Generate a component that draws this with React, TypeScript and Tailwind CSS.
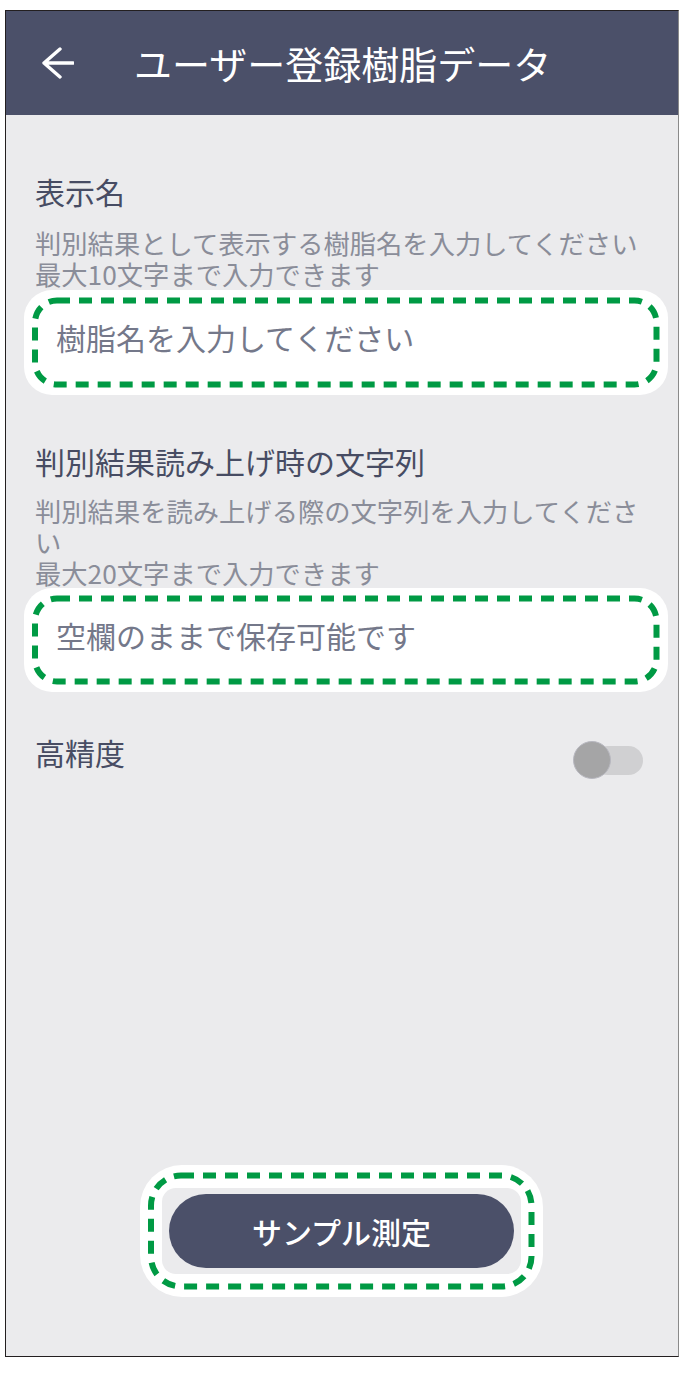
import React from "react";

function Dashed({ w, h, r }: { w: number; h: number; r: number }) {
  return (
    <svg
      className="absolute left-0 top-0 pointer-events-none"
      width={w}
      height={h}
      viewBox={`0 0 ${w} ${h}`}
    >
      <rect
        x={11}
        y={10.5}
        width={w - 22.5}
        height={h - 21}
        rx={r}
        ry={r}
        fill="none"
        stroke="#009a44"
        strokeWidth={6}
        strokeDasharray="13 9"
      />
    </svg>
  );
}

function Field({ h, text }: { h: number; text: string }) {
  return (
    <div
      className="relative -ml-[11px] w-[644px] bg-white rounded-[28px] flex items-center pl-[32px] pb-[11px]"
      style={{ height: h }}
    >
      <span className="text-[30px] leading-[40px] text-[#74788a]">{text}</span>
      <Dashed w={644} h={h} r={22} />
    </div>
  );
}

export default function App() {
  return (
    <div className="w-[683px] h-[1385px] bg-white pt-[10px] pl-[5px] font-['Noto_Sans_CJK_JP','Noto_Sans',sans-serif]">
      <div className="w-[674px] h-[1347px] border border-[#231f20] border-r-[#8a8a8a] bg-[#ebebed] flex flex-col">
        <header className="h-[104px] shrink-0 bg-[#4b5069] flex items-center">
          <svg
            className="ml-[36px] shrink-0"
            width="32"
            height="32"
            viewBox="0 0 32 32"
            fill="none"
            stroke="white"
            strokeWidth="3.4"
            strokeLinecap="round"
            strokeLinejoin="round"
          >
            <path d="M18 2 L2 16 L18 30 M2 16 H31" />
          </svg>
          <h1 className="ml-[60px] text-[38px] leading-[48px] text-white font-normal">
            ユーザー登録樹脂データ
          </h1>
        </header>

        <main className="flex-1 flex flex-col pl-[29px] pr-[30px] pt-[56px]">
          <div className="text-[30px] leading-[40px] text-[#474c63]">表示名</div>
          <div className="mt-[16px] text-[26.3px] leading-[31px] text-[#8a8d99]">
            <p>判別結果として表示する樹脂名を入力してください</p>
            <p>最大10文字まで入力できます</p>
          </div>
          <div className="mt-[1px]">
            <Field h={105} text="樹脂名を入力してください" />
          </div>

          <div className="mt-[46px] text-[30px] leading-[40px] text-[#474c63]">
            判別結果読み上げ時の文字列
          </div>
          <div className="mt-[14px] text-[26.3px] leading-[31px] text-[#8a8d99]">
            <p>判別結果を読み上げる際の文字列を入力してください</p>
            <p>最大20文字まで入力できます</p>
          </div>
          <div>
            <Field h={104} text="空欄のままで保存可能です" />
          </div>

          <div className="mt-[40px] flex items-start justify-between">
            <div className="text-[30px] leading-[40px] text-[#474c63]">高精度</div>
            <div className="relative mt-[9px] mr-[5px] w-[70px] h-[38px]">
              <div className="absolute right-0 top-[4.5px] w-[50px] h-[29px] rounded-full bg-[#d0d0d2]" />
              <div className="absolute left-0 top-0 w-[38px] h-[38px] rounded-full bg-[#a5a5a6] border border-[#b8b8c0]" />
            </div>
          </div>

          <div className="flex-1" />

          <div className="self-center mb-[59px] relative w-[403px] h-[132px] rounded-[42px] bg-white flex items-center justify-center">
            <div className="w-[359px] h-[86px] rounded-[14px] bg-[#ebebed] flex items-center justify-center">
              <button className="w-[345px] h-[74px] rounded-full bg-[#4b5069] text-white text-[30px] leading-[40px] font-medium">
                サンプル測定
              </button>
            </div>
            <Dashed w={403} h={132} r={30} />
          </div>
        </main>
      </div>
    </div>
  );
}
